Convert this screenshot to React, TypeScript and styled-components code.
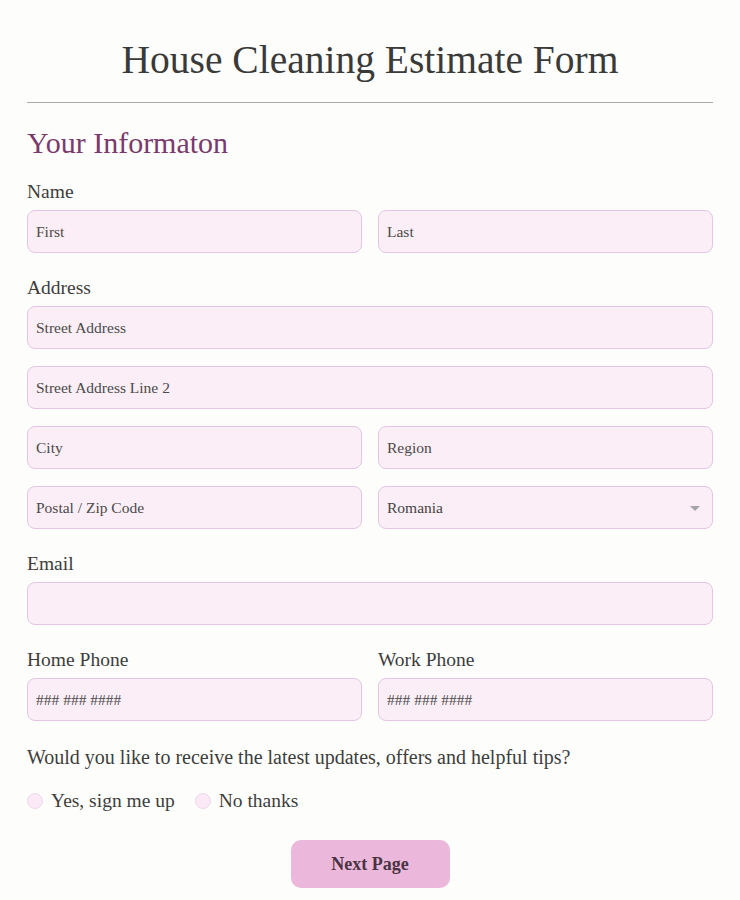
import React from 'react'
import styled, { createGlobalStyle } from 'styled-components'

const GlobalStyle = createGlobalStyle`
  body {
    margin: 0;
    background: #fdfdfc;
    font-family: "Liberation Serif", "DejaVu Serif", serif;
    color: #3b3b3b;
  }
`

const Page = styled.form`
  display: flex;
  flex-direction: column;
  padding: 0 27px 12px;
`

const Title = styled.h1`
  margin: 38px 0 0;
  font-size: 39.5px;
  line-height: 44px;
  font-weight: normal;
  text-align: center;
  color: #3a3a38;
`

const Rule = styled.hr`
  margin: 20px 0 0;
  border: 0;
  border-top: 1px solid #a9a9a9;
`

const SectionTitle = styled.h2`
  margin: 24px 0 0;
  font-size: 30px;
  line-height: 32px;
  font-weight: normal;
  color: #7a3a6c;
`

const Field = styled.div<{ $top?: number }>`
  display: flex;
  flex-direction: column;
  gap: 7px;
  margin-top: ${p => p.$top ?? 24}px;
`

const Label = styled.label`
  font-size: 19.5px;
  line-height: 22px;
  color: #3d3d3d;
`

const Stack = styled.div`
  display: flex;
  flex-direction: column;
  gap: 17px;
`

const Row = styled.div`
  display: grid;
  grid-template-columns: 1fr 1fr;
  column-gap: 16px;
`

const Input = styled.input`
  box-sizing: border-box;
  width: 100%;
  height: 43px;
  padding: 0 8px;
  border: 1px solid #e4c6e2;
  border-radius: 8px;
  background: #fbeef6;
  font-family: inherit;
  font-size: 15.5px;
  color: #444;
  outline: none;

  &::placeholder {
    color: #4a4a4a;
  }
`

const SelectBox = styled.div`
  position: relative;
`

const Select = styled.select`
  box-sizing: border-box;
  width: 100%;
  height: 43px;
  padding: 0 8px;
  border: 1px solid #e4c6e2;
  border-radius: 8px;
  background: #fbeef6;
  font-family: inherit;
  font-size: 15.5px;
  color: #444;
  appearance: none;
  outline: none;
`

const Arrow = styled.span`
  position: absolute;
  right: 13px;
  top: 20px;
  width: 0;
  height: 0;
  border-left: 5px solid transparent;
  border-right: 5px solid transparent;
  border-top: 5px solid #a4a4a4;
  pointer-events: none;
`

const Question = styled.p`
  margin: 25px 0 0;
  font-size: 20px;
  line-height: 22px;
  color: #3d3d3d;
`

const Options = styled.div`
  display: flex;
  gap: 20px;
  margin-top: 22px;
`

const Option = styled.label`
  display: flex;
  align-items: center;
  gap: 8px;
  font-size: 19.5px;
  line-height: 22px;
  color: #3d3d3d;
`

const Radio = styled.span`
  box-sizing: border-box;
  width: 16px;
  height: 16px;
  border-radius: 50%;
  border: 1px solid #eed7ea;
  background: #fbeaf5;
`

const Actions = styled.div`
  display: flex;
  justify-content: center;
  margin-top: 28px;
`

const NextButton = styled.button`
  width: 159px;
  height: 48px;
  border: 0;
  border-radius: 10px;
  background: #ebb8dc;
  font-family: inherit;
  font-size: 18px;
  font-weight: bold;
  color: #4a3444;
`

const App = () => (
  <>
    <GlobalStyle />
    <Page onSubmit={e => e.preventDefault()}>
      <Title>House Cleaning Estimate Form</Title>
      <Rule />
      <SectionTitle>Your Informaton</SectionTitle>

      <Field $top={22}>
        <Label>Name</Label>
        <Row>
          <Input placeholder="First" />
          <Input placeholder="Last" />
        </Row>
      </Field>

      <Field>
        <Label>Address</Label>
        <Stack>
          <Input placeholder="Street Address" />
          <Input placeholder="Street Address Line 2" />
          <Row>
            <Input placeholder="City" />
            <Input placeholder="Region" />
          </Row>
          <Row>
            <Input placeholder="Postal / Zip Code" />
            <SelectBox>
              <Select defaultValue="Romania">
                <option>Romania</option>
              </Select>
              <Arrow />
            </SelectBox>
          </Row>
        </Stack>
      </Field>

      <Field>
        <Label>Email</Label>
        <Input />
      </Field>

      <Row>
        <Field>
          <Label>Home Phone</Label>
          <Input placeholder="### ### ####" />
        </Field>
        <Field>
          <Label>Work Phone</Label>
          <Input placeholder="### ### ####" />
        </Field>
      </Row>

      <Question>Would you like to receive the latest updates, offers and helpful tips?</Question>
      <Options>
        <Option><Radio />Yes, sign me up</Option>
        <Option><Radio />No thanks</Option>
      </Options>

      <Actions>
        <NextButton type="submit">Next Page</NextButton>
      </Actions>
    </Page>
  </>
)

export default App
